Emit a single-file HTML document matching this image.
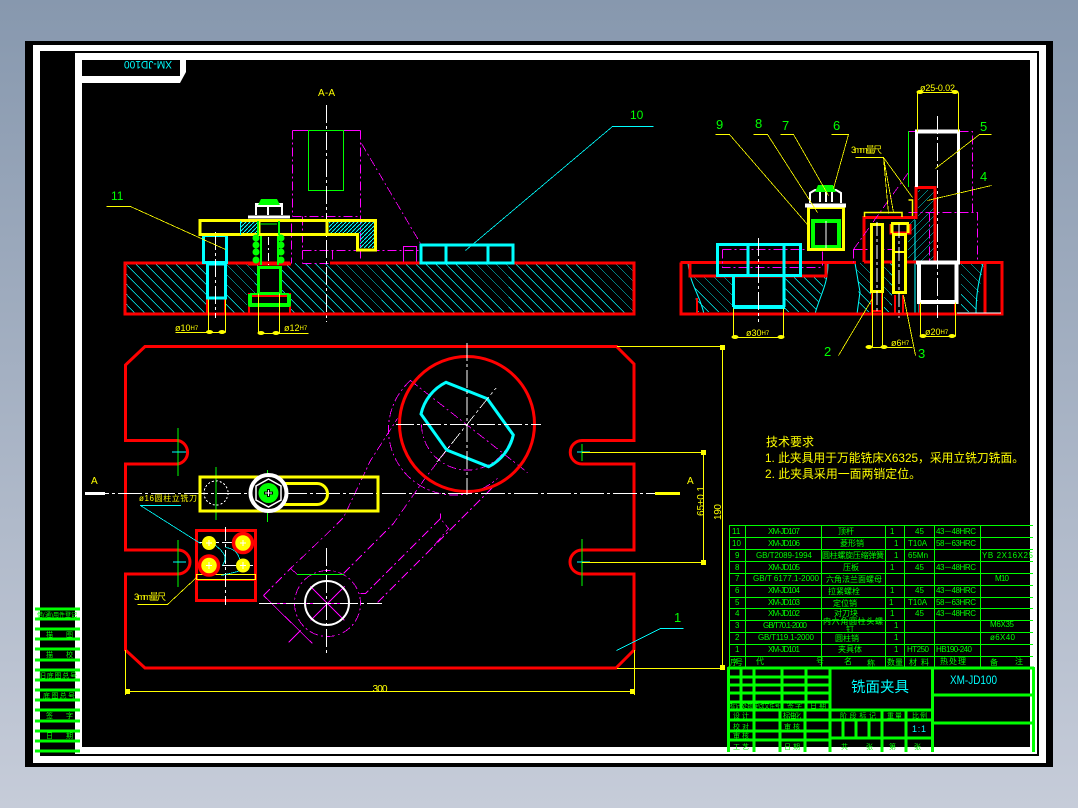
<!DOCTYPE html>
<html lang="zh"><head><meta charset="utf-8"><title>铣面夹具</title>
<style>
html,body{margin:0;padding:0;width:1078px;height:808px;overflow:hidden;background:#a5b0c2}
svg{display:block}
text{font-family:"Liberation Sans","Noto Sans CJK SC",sans-serif}
.ln{shape-rendering:crispEdges}
</style></head><body>
<svg width="1078" height="808" viewBox="0 0 1078 808" xmlns="http://www.w3.org/2000/svg">
<defs>
<linearGradient id="bg" x1="0" y1="0" x2="0" y2="1"><stop offset="0" stop-color="#8798ae"/><stop offset="1" stop-color="#c6ccd9"/></linearGradient>
<pattern id="h3" width="4" height="4" patternUnits="userSpaceOnUse"><path d="M0 4L4 0" stroke="#0ff" stroke-width="1" shape-rendering="crispEdges"/></pattern>
<clipPath id="cBase"><path d="M125 263H634V314H125Z"/></clipPath>
<clipPath id="cRight"><path d="M693 277H733V312H697ZM784 277H826L815 312H784ZM856 263H871V312H860ZM884 263H892V312H884ZM961 263H984L976 312H961Z"/></clipPath>
<clipPath id="cPart4"><path d="M918 190H934V262H908V218H918Z"/></clipPath>
</defs>
<rect width="1078" height="808" fill="url(#bg)"/>
<!-- frame -->
<rect x="25" y="41" width="1028" height="726" fill="#000"/>
<rect x="33" y="45" width="1013" height="718" fill="#fff"/>
<rect x="40" y="51" width="999" height="705" fill="#000"/>
<rect x="75" y="53" width="962" height="701" fill="#fff"/>
<rect x="82" y="60" width="948" height="687" fill="#000"/>
<path d="M82 60H186V72L180 83H82Z" fill="#fff"/>
<rect x="82" y="60" width="98" height="16" fill="#000"/>
<text x="148" y="69" transform="rotate(180 148 65)" fill="#0ff" font-size="11" text-anchor="middle" textLength="48" lengthAdjust="spacingAndGlyphs">XM-JD100</text>
<!-- left column -->
<g stroke="#0f0" stroke-width="3" class="ln">
<path d="M35 609H80M35 619H80M35 629H80M35 639H80M35 649H80M35 660H80M35 670H80M35 680H80M35 690H80M35 700H80M35 710H80M35 721H80M35 731H80M35 741H80M35 751H80"/>
</g>
<g fill="#0f0" font-size="6">
<text x="37" y="617" textLength="40" lengthAdjust="spacingAndGlyphs">借(通)用件登记</text>
<text x="46" y="637" font-size="7">描</text><text x="66" y="637" font-size="7">图</text>
<text x="46" y="657" font-size="7">描</text><text x="66" y="657" font-size="7">校</text>
<text x="39" y="678" textLength="38" font-size="7" lengthAdjust="spacing">旧底图总号</text>
<text x="43" y="698" textLength="32" font-size="7" lengthAdjust="spacing">底图总号</text>
<text x="46" y="718" font-size="7">签</text><text x="66" y="718" font-size="7">字</text>
<text x="46" y="738" font-size="7">日</text><text x="66" y="738" font-size="7">期</text>
</g>

<!-- top-left view: hatching and magenta -->
<path clip-path="url(#cBase)" stroke="#0ff" stroke-width=".7" fill="none" class="ln" d="M75 263l51 51M85 263l51 51M95 263l51 51M105 263l51 51M115 263l51 51M125 263l51 51M135 263l51 51M145 263l51 51M155 263l51 51M165 263l51 51M175 263l51 51M185 263l51 51M195 263l51 51M205 263l51 51M215 263l51 51M225 263l51 51M235 263l51 51M245 263l51 51M255 263l51 51M265 263l51 51M275 263l51 51M285 263l51 51M295 263l51 51M305 263l51 51M315 263l51 51M325 263l51 51M335 263l51 51M345 263l51 51M355 263l51 51M365 263l51 51M375 263l51 51M385 263l51 51M395 263l51 51M405 263l51 51M415 263l51 51M425 263l51 51M435 263l51 51M445 263l51 51M455 263l51 51M465 263l51 51M475 263l51 51M485 263l51 51M495 263l51 51M505 263l51 51M515 263l51 51M525 263l51 51M535 263l51 51M545 263l51 51M555 263l51 51M565 263l51 51M575 263l51 51M585 263l51 51M595 263l51 51M605 263l51 51M615 263l51 51M625 263l51 51"/>
<rect x="247" y="293" width="44" height="21" fill="#000"/>
<rect x="258" y="263" width="22" height="30" fill="#000"/>
<rect x="207" y="298" width="18" height="16" fill="#000"/>
<g fill="none" stroke="#f0f" stroke-width=".8" class="ln" transform="translate(.5 .5)">
<path d="M292 130H360"/>
<path d="M292 130V216M360 130V262M292 216H360M302 216V263M302 250H420M332 250V263M291 223V263M302 263H410" stroke-dasharray="9 3 2 3"/>
<path d="M361 143L420 243" stroke-dasharray="9 3 2 3"/>
<path d="M403 246H416V263H403Z"/>
</g>
<rect x="308.500" y="130.500" width="35" height="60" fill="none" stroke="#0f0" class="ln"/>
<path d="M326.500 105V322" stroke="#fff" stroke-dasharray="18 3 3 3" class="ln"/>
<!-- base plate -->
<path d="M290 263H125V314H634V263H330" fill="none" stroke="#f00" stroke-width="3"/>
<path d="M249 293V314M290 293V314M207 299V314M225 299V314" stroke="#f00" stroke-width="2" class="ln"/>
<path d="M248 264H291" stroke="#f00" stroke-width="3"/>
<rect x="248" y="293" width="43" height="4" fill="#f00"/>
<!-- cyan screw -->
<rect x="203.500" y="235.500" width="23" height="27" fill="#000" stroke="#0ff" stroke-width="3"/>
<rect x="207.500" y="264" width="18" height="34" fill="#000" stroke="#0ff" stroke-width="3"/>
<path d="M215.500 232V318" stroke="#fff" stroke-dasharray="18 3 3 3" class="ln"/>
<!-- clamp -->
<rect x="240" y="222" width="18" height="11" fill="url(#h3)"/>
<path d="M329 222H374V248H360V233H329Z" fill="url(#h3)"/>
<path d="M200 220.500H375.500V250H357.500V234.500H200Z" fill="none" stroke="#ff0" stroke-width="3"/>
<path d="M259 220V235M327 220V235" stroke="#ff0" stroke-width="3"/>
<path d="M240.500 221V235" stroke="#0ff" class="ln"/>
<path d="M260 224H277" stroke="#0f0" class="ln"/>
<!-- green stud -->
<g stroke="#0f0" fill="none">
<path d="M258 221V235M279 221V235" stroke-width="2"/>
<rect x="258.500" y="267.500" width="22" height="26" stroke-width="3"/>
<path d="M261 236V265M278 236V265" stroke-width="2"/>
<path d="M250 294V305H289V294" stroke-width="4" stroke-linejoin="round"/>
<path d="M250 294H289" stroke-width="2"/>
</g>
<g fill="#0f0">
<circle cx="256" cy="238" r="3.500"/><circle cx="256" cy="245" r="3.500"/><circle cx="256" cy="252" r="3.500"/><circle cx="256" cy="260" r="3.500"/>
<circle cx="281" cy="238" r="3.500"/><circle cx="281" cy="245" r="3.500"/><circle cx="281" cy="252" r="3.500"/><circle cx="281" cy="260" r="3.500"/>
</g>
<path d="M268.500 237V265" stroke="#fff" stroke-dasharray="8 3 2 3" class="ln"/>
<!-- nut -->
<path d="M248 217H290" stroke="#fff" stroke-width="3"/>
<path d="M256 215V204H282V215M268 204V215M256 206H282" fill="none" stroke="#fff" stroke-width="2"/>
<path d="M258 205L261 199H277L280 205Z" fill="#0f0"/>
<!-- part 10 -->
<g fill="none" stroke="#0ff" stroke-width="3">
<rect x="421" y="245" width="92" height="18"/>
<path d="M446 245V263M488 245V263"/>
</g>
<path d="M465 250L612 126H653" fill="none" stroke="#0ff" stroke-width=".8" class="ln" transform="translate(.5 .5)"/>
<!-- labels & dims of top-left -->
<g fill="none" stroke="#ff0" stroke-width=".8" class="ln" transform="translate(.5 .5)">
<path d="M106 206H130L225 249"/>
<path d="M208 299V332M225 299V332M175 332H225"/>
<path d="M258 293V333M279 293V333M258 333H308"/>
</g>
<g fill="#ff0">
<ellipse cx="209.500" cy="332" rx="3.500" ry="2"/><ellipse cx="222" cy="332" rx="3.500" ry="2"/>
<ellipse cx="261" cy="333" rx="3.500" ry="2"/><ellipse cx="276" cy="333" rx="3.500" ry="2"/>
<text x="175" y="331" font-size="9">ø10<tspan font-size="6" dy="-1">H7</tspan></text>
<text x="284" y="331" font-size="9">ø12<tspan font-size="6" dy="-1">H7</tspan></text>
<text x="318" y="96" font-size="10" textLength="17">A-A</text>
</g>
<text x="111" y="200" fill="#0f0" font-size="12">11</text>
<text x="630" y="119" fill="#0f0" font-size="12">10</text>

<!-- right view -->
<path clip-path="url(#cRight)" stroke="#0ff" stroke-width=".7" fill="none" class="ln" d="M640 263l51 51M650 263l51 51M660 263l51 51M670 263l51 51M680 263l51 51M690 263l51 51M700 263l51 51M710 263l51 51M720 263l51 51M730 263l51 51M740 263l51 51M750 263l51 51M760 263l51 51M770 263l51 51M780 263l51 51M790 263l51 51M800 263l51 51M810 263l51 51M820 263l51 51M830 263l51 51M840 263l51 51M850 263l51 51M860 263l51 51M870 263l51 51M880 263l51 51M890 263l51 51M900 263l51 51M910 263l51 51M920 263l51 51M930 263l51 51M940 263l51 51M950 263l51 51M960 263l51 51M970 263l51 51M980 263l51 51"/>
<path clip-path="url(#cPart4)" stroke="#0ff" stroke-width=".7" fill="none" class="ln" d="M840 262l72 -72M848 262l72 -72M856 262l72 -72M864 262l72 -72M872 262l72 -72M880 262l72 -72M888 262l72 -72M896 262l72 -72M904 262l72 -72M912 262l72 -72M920 262l72 -72M928 262l72 -72"/>
<g fill="none" stroke="#0ff" stroke-width="1">
<path d="M688 263C690 285 700 295 704 314M828 263C828 285 820 295 815 314M855 263L860 292L857 314M983 263C978 285 976 295 976 314M915 263V314M919 290V314M915 220V262"/>
</g>
<g fill="none" stroke="#f00" stroke-width="3">
<path d="M680.500 262.500H856M826 263V276H690V263M681 262.500V314H1002V262.500H960M985 263V314"/>
<path d="M864 262V217.500H916V187.500H935V262H864"/>
<path d="M891 224V233H910V224"/>
</g>
<path d="M697 298V314M872 292V314M882 292V314M872 311H882M895 295V314M903 295V314M920 302V314M955 302V314" stroke="#f00" stroke-width="2" class="ln"/>
<!-- magenta right -->
<g fill="none" stroke="#f0f" stroke-width=".8" class="ln" transform="translate(.5 .5)">
<path d="M908 131H972V212M908 212H977V262M929 212V262M853 249L908 172M853 249V262M853 249H895M722 249V267H822M722 249H822V267" stroke-dasharray="9 3 2 3"/>
</g>
<path d="M908.500 131V187" stroke="#0f0" stroke-width="1" class="ln"/>
<!-- cyan block -->
<rect x="717.500" y="244.500" width="83" height="31" fill="none" stroke="#0ff" stroke-width="3"/>
<path d="M748 244V276M784 244V276" stroke="#0ff" stroke-width="3"/>
<path d="M733.500 276V307M784 276V307M733 307H785" fill="none" stroke="#0ff" stroke-width="3"/>
<path d="M733 307H785" stroke="#0ff" stroke-width="4"/>
<path d="M758.500 238V322" stroke="#fff" stroke-dasharray="18 3 3 3" class="ln"/>
<!-- part 8 -->
<rect x="813" y="221" width="26" height="26" fill="none" stroke="#0f0" stroke-width="4"/>
<rect x="808.500" y="207.500" width="35" height="42" fill="none" stroke="#ff0" stroke-width="3"/>
<path d="M805 205.500H846" stroke="#fff" stroke-width="4"/>
<path d="M810 203V193L815 190H836L841 193V203M820 192V202M826 192V202M832 192V202" fill="none" stroke="#fff" stroke-width="2"/>
<path d="M815 192L818 185H833L836 192Z" fill="#0f0"/>
<path d="M826 221V248" stroke="#fff" class="ln"/>
<!-- part 2 & 3 -->
<rect x="871.500" y="224.500" width="11" height="67" fill="#000" stroke="#ff0" stroke-width="3"/>
<path d="M877 222V312" stroke="#fff" stroke-dasharray="14 3 3 3" class="ln"/>
<path d="M891 223.500H909M892 224V233M908 224V233" fill="none" stroke="#ff0" stroke-width="3"/>
<rect x="893.500" y="234.500" width="12" height="58" fill="#000" stroke="#ff0" stroke-width="3"/>
<path d="M894 252H905" stroke="#ff0" stroke-width="2"/>
<path d="M899 224V318" stroke="#fff" stroke-dasharray="14 3 3 3" class="ln"/>
<path d="M864.500 217V212.500H902V217M908.500 200H912.500V216" fill="none" stroke="#ff0" stroke-width="1.500"/>
<!-- part 5 white -->
<g fill="none" stroke="#fff">
<path d="M916.500 187V131.500H958.500V262" stroke-width="3"/>
<path d="M915 131.500H960" stroke-width="4"/>
<path d="M916 262.500H960" stroke-width="4"/>
<path d="M919 263V302H956.500V263" stroke-width="4"/>
</g>
<path d="M937.500 116V318" stroke="#fff" stroke-dasharray="18 3 3 3" class="ln"/>
<path d="M957 313H1001" stroke="#fff" class="ln"/>
<!-- leaders right -->
<g fill="none" stroke="#ff0" stroke-width=".8" class="ln" transform="translate(.5 .5)">
<path d="M715 134H729L807 224M753 134H767L817 212M780 134H793L828 195M831 134H848L833 188"/>
<path d="M855 157H883L893 212M883 157L912 197M883 157L888 213"/>
<path d="M991 134H979L935 168M991 185L927 200"/>
<path d="M872 298L838 355M903 295L915 355"/>
<path d="M917 92H958M917 92V131M958 92V131"/>
<path d="M733 308V337M783 308V337M733 337H783"/>
<path d="M920 302V336M955 302V336M920 336H955"/>
<path d="M872 292V347M882 292V347M872 347H912"/>
</g>
<g fill="#ff0">
<ellipse cx="920" cy="92" rx="3.500" ry="2"/><ellipse cx="955" cy="92" rx="3.500" ry="2"/>
<ellipse cx="735" cy="337" rx="3.500" ry="2"/><ellipse cx="781" cy="337" rx="3.500" ry="2"/>
<ellipse cx="923" cy="336" rx="3.500" ry="2"/><ellipse cx="952" cy="336" rx="3.500" ry="2"/>
<ellipse cx="869" cy="347" rx="3.500" ry="2"/><ellipse cx="884" cy="347" rx="3.500" ry="2"/>
<text x="920" y="91" font-size="9" textLength="35">ø25-0.02</text>
<text x="746" y="336" font-size="9">ø30<tspan font-size="6" dy="-1">H7</tspan></text>
<text x="925" y="335" font-size="9">ø20<tspan font-size="6" dy="-1">H7</tspan></text>
<text x="891" y="346" font-size="9">ø6<tspan font-size="6" dy="-1">H7</tspan></text>
<text x="851" y="153" font-size="9" textLength="31">3mm量尺</text>
</g>
<g fill="#0f0" font-size="13">
<text x="716" y="129">9</text><text x="755" y="128">8</text><text x="782" y="130">7</text><text x="833" y="130">6</text>
<text x="980" y="131">5</text><text x="980" y="181">4</text><text x="824" y="356">2</text><text x="918" y="358">3</text>
<text x="674" y="622">1</text>
</g>

<!-- plan view -->
<g fill="none" stroke="#f0f" stroke-width=".8" class="ln" transform="translate(.5 .5)">
<path d="M421 424A46 46 0 0 0 511 437" stroke-dasharray="9 3 2 3"/>
<path d="M410 380A62 62 0 0 0 497 478" stroke-dasharray="9 3 2 3"/>
<path d="M410 380L527 472" stroke-dasharray="9 3 2 3"/>
<path d="M263 595L290 568L333 527L343 517L370 460L397 418" stroke-dasharray="9 3 2 3"/>
<path d="M263 595L312 643M290 568L297 574M288 642L300 630"/>
<path d="M343 573L393 523L423 480L452 442" stroke-dasharray="9 3 2 3"/>
<path d="M377 602L497 482" stroke-dasharray="9 3 2 3"/>
<path d="M360 593H365L440 518L448 528L431 548M440 513V518" stroke-dasharray="9 3 2 3"/>
<path d="M327 570A33 33 0 1 0 360 603A33 33 0 0 0 327 570" stroke-dasharray="9 3 2 3"/>
<path d="M259 603H349M310 586L344 620M344 586L310 620"/>
</g>
<path d="M297 574.500H344" stroke="#0f0" class="ln"/>
<circle cx="327" cy="603" r="22" fill="none" stroke="#fff" stroke-width="2"/>
<path d="M326.500 548V655" stroke="#fff" stroke-dasharray="18 3 3 3" class="ln"/>
<path d="M259 603.500H382" stroke="#fff" stroke-dasharray="18 3 3 3" class="ln"/>
<!-- plate -->
<path d="M145 346.500H616.500L634 364V440.500H582A11.700 11.700 0 0 0 582 464H634V550H582A12 12 0 0 0 582 574H634V650L616 668H145L125.500 650V574H178A12 12 0 0 0 178 550H125.500V464H178A12 12 0 0 0 178 440.500H125.500V365Z" fill="none" stroke="#f00" stroke-width="3"/>
<circle cx="467" cy="424" r="67.500" fill="none" stroke="#f00" stroke-width="3"/>
<path d="M446 382.300L487.300 398.700L513.300 435A47 47 0 0 1 488.700 466.700L446.700 450L421 414A47 47 0 0 1 446 382.300Z" fill="none" stroke="#0ff" stroke-width="3"/>
<path d="M467 343V495M396 424.500H541" stroke="#fff" stroke-dasharray="18 3 3 3" class="ln"/>
<path d="M437 462L496 388" stroke="#fff" stroke-width=".8" stroke-dasharray="14 3 3 3" class="ln"/>
<!-- slot crosses -->
<g stroke="#0f0" class="ln">
<path d="M178 428V476M178 540V587M582 444V461M582 539V586M267.500 470V522M216 467V520"/>
</g>
<g stroke="#0ff" class="ln"><path d="M172 452H186M173 562H186M577 452H590M577 562H590"/></g>
<!-- centre line -->
<path d="M85 493.500H655" stroke="#fff" stroke-dasharray="24 3 3 3" class="ln"/>
<path d="M85 493.500H105" stroke="#fff" stroke-width="3"/>
<path d="M655 493.500H680" stroke="#ff0" stroke-width="3"/>
<g fill="#ff0" font-size="10"><text x="91" y="484">A</text><text x="687" y="484">A</text></g>
<!-- yellow bar -->
<rect x="200" y="477" width="178" height="34" fill="none" stroke="#ff0" stroke-width="3"/>
<path d="M276 483.500H317A10.500 10.500 0 0 1 317 504.500H276" fill="none" stroke="#ff0" stroke-width="3"/>
<circle cx="216" cy="493" r="12" fill="none" stroke="#fff" stroke-dasharray="2 2" class="ln"/>
<circle cx="268.500" cy="493" r="18" fill="#000" stroke="#fff" stroke-width="4"/>
<path d="M268.500 479L281 486V500L268.500 507L256 500V486Z" fill="#000" stroke="#fff" stroke-width="1.500"/>
<circle cx="268.500" cy="493" r="10" fill="#0f0"/>
<path d="M268.500 489V497M264 493H273" stroke="#000" stroke-width="3"/>
<path d="M268.500 490V496M265 493H272" stroke="#fff" stroke-width="1" class="ln"/>
<!-- small block -->
<rect x="196.500" y="530.500" width="59" height="70" fill="none" stroke="#f00" stroke-width="3"/>
<path d="M196 580H256" stroke="#f00" stroke-width="2"/>
<rect x="196.500" y="574.500" width="59" height="5" fill="none" stroke="#ff0" class="ln"/>
<path d="M225.500 527V605M199 542.500H253M199 565.500H253" stroke="#fff" stroke-dasharray="14 3 3 3" class="ln"/>
<path d="M140 505L200 543M215 545C228 555 225 560 222 565M225 547C235 548 240 555 240 565M221 575C228 573 235 572 240 570" fill="none" stroke="#0ff" stroke-width=".8" class="ln" transform="translate(.5 .5)"/>
<path d="M140 505.500H181" stroke="#0ff" class="ln"/>
<g>
<circle cx="243" cy="543" r="9.500" fill="#ff0" stroke="#f00" stroke-width="3.500"/>
<circle cx="209" cy="565.500" r="9.500" fill="#ff0" stroke="#f00" stroke-width="3.500"/>
<circle cx="209" cy="543" r="7" fill="#ff0"/>
<circle cx="243" cy="565.500" r="7" fill="#ff0"/>
</g>
<path d="M209 540V546M206 543H212M243 540V546M240 543H246M209 562V569M206 565.500H212M243 562V569M240 565.500H246" stroke="#fff" class="ln"/>
<text x="139" y="501" fill="#ff0" font-size="8" textLength="58">ø16圆柱立铣刀</text>
<text x="134" y="600" fill="#ff0" font-size="9" textLength="32">3mm量尺</text>
<path d="M137 604H167L196 577" fill="none" stroke="#ff0" stroke-width=".8" class="ln" transform="translate(.5 .5)"/>
<!-- dims plan -->
<g fill="none" stroke="#ff0" stroke-width="1" class="ln">
<path d="M617 346.500H722M617 668.500H722M722.500 347V668M582 452.500H703M582 562.500H703M703.500 452V562M125.500 650V695M634.500 650V695M125 691.500H634"/>
</g>
<g fill="#ff0">
<rect x="720" y="345" width="5" height="5"/><rect x="720" y="665" width="5" height="5"/>
<rect x="701" y="450" width="5" height="5"/><rect x="701" y="560" width="5" height="5"/>
<rect x="125" y="689" width="5" height="5"/><rect x="630" y="689" width="5" height="5"/>
<text x="380" y="692" font-size="10" text-anchor="middle" textLength="15">300</text>
<text transform="translate(704,516) rotate(-90)" font-size="10" textLength="30">65±0.1</text>
<text transform="translate(721,520) rotate(-90)" font-size="10" textLength="16">190</text>
</g>
<path d="M616 650L660 628H683" fill="none" stroke="#0ff" stroke-width=".8" class="ln" transform="translate(.5 .5)"/>
<!-- tech req -->
<g fill="#ff0" font-size="12">
<text x="766" y="446" textLength="48">技术要求</text>
<text x="765" y="462" textLength="259" lengthAdjust="spacingAndGlyphs">1. 此夹具用于万能铣床X6325，采用立铣刀铣面。</text>
<text x="765" y="478" textLength="156" lengthAdjust="spacingAndGlyphs">2. 此夹具采用一面两销定位。</text>
</g>
<!-- parts table -->
<g stroke="#0f0" stroke-width="1" class="ln" fill="none">
<path d="M729 525.500H1033M729 537.500H1033M729 549.500H1033M729 561.500H1033M729 573.500H1033M729 585.500H1033M729 597.500H1033M729 608.500H1033M729 620.500H1033M729 632.500H1033M729 644.500H1033M729 656.500H1033"/>
<path d="M729.500 525V667M745.500 525V667M821.500 525V667M885.500 525V667M904.500 525V667M934.500 525V667M980.500 525V667"/>
</g>
<g fill="#0f0" font-size="8">
<text x="732" y="534">11</text><text x="768" y="534" textLength="32">XM-JD107</text><text x="838" y="534" textLength="16">顶杆</text><text x="890" y="534">1</text><text x="915" y="534">45</text><text x="936" y="534" textLength="40">43－48HRC</text>
<text x="732" y="546">10</text><text x="768" y="546" textLength="32">XM-JD106</text><text x="840" y="546" textLength="24">菱形销</text><text x="894" y="546">1</text><text x="908" y="546">T10A</text><text x="936" y="546" textLength="40">58－63HRC</text>
<text x="735" y="558">9</text><text x="756" y="558" textLength="56">GB/T2089-1994</text><text x="822" y="558" textLength="62">圆柱螺旋压缩弹簧</text><text x="894" y="558">1</text><text x="908" y="558">65Mn</text><text x="982" y="558" textLength="51">YB 2X16X25</text>
<text x="735" y="570">8</text><text x="768" y="570" textLength="32">XM-JD105</text><text x="843" y="570" textLength="16">压板</text><text x="890" y="570">1</text><text x="915" y="570">45</text><text x="936" y="570" textLength="40">43－48HRC</text>
<text x="735" y="581">7</text><text x="753" y="581" textLength="66">GB/T 6177.1-2000</text><text x="826" y="582" textLength="56">六角法兰面螺母</text><text x="995" y="581" textLength="14">M10</text>
<text x="735" y="593">6</text><text x="768" y="593" textLength="32">XM-JD104</text><text x="828" y="594" textLength="32">拉紧螺栓</text><text x="890" y="593">1</text><text x="915" y="593">45</text><text x="936" y="593" textLength="40">43－48HRC</text>
<text x="735" y="605">5</text><text x="768" y="605" textLength="32">XM-JD103</text><text x="833" y="606" textLength="24">定位销</text><text x="889" y="605">1</text><text x="908" y="605">T10A</text><text x="936" y="605" textLength="40">58－63HRC</text>
<text x="735" y="616">4</text><text x="768" y="616" textLength="32">XM-JD102</text><text x="834" y="616" textLength="24">对刀块</text><text x="890" y="616">1</text><text x="915" y="616">45</text><text x="936" y="616" textLength="40">43－48HRC</text>
<text x="823" y="624" textLength="60">内六角圆柱头螺</text><text x="846" y="632">钉</text>
<text x="735" y="628">3</text><text x="763" y="628" textLength="44">GB/T70.1-2000</text><text x="894" y="628">1</text><text x="990" y="627" textLength="24">M6X35</text>
<text x="735" y="640">2</text><text x="758" y="640" textLength="56">GB/T119.1-2000</text><text x="835" y="641" textLength="24">圆柱销</text><text x="894" y="640">1</text><text x="990" y="640" textLength="25">ø6X40</text>
<text x="735" y="652">1</text><text x="768" y="652" textLength="32">XM-JD101</text><text x="838" y="652" textLength="24">夹具体</text><text x="894" y="652">1</text><text x="907" y="652" textLength="22">HT250</text><text x="936" y="652" textLength="36">HB190-240</text>
<text x="730" y="665" textLength="13">序号</text><text x="756" y="664">代</text><text x="816" y="664">号</text><text x="844" y="664">名</text><text x="867" y="666">称</text><text x="887" y="665" textLength="16">数量</text><text x="909" y="665" textLength="20">材 料</text><text x="940" y="664" textLength="26">热处理</text><text x="990" y="665">备</text><text x="1015" y="664">注</text>
</g>
<!-- title block -->
<g fill="none" stroke="#0f0" stroke-width="3" class="ln">
<path d="M728 668H1034M728.500 667V752M1033.500 667V752M830 667V752M932.500 667V752"/>
<path d="M728 677H830M728 685H830M728 693H830M728 702H830M728 710H932M728 720H932M728 731H830M728 740H830M830 738H932M932 695H1034M932 723H1034"/>
<path d="M741 667V710M754 667V752M782 667V710M806 667V710M780 710V752M805 710V752M882 710V752M906 710V752M843 720V738M856 720V738M869 720V738"/>
</g>
<g fill="#0f0" font-size="7">
<text x="730" y="708" textLength="50" lengthAdjust="spacingAndGlyphs">标记 处数 更改文件号</text><text x="787" y="708" textLength="15">签字</text><text x="810" y="708" textLength="16">日期</text>
<text x="733" y="718" textLength="16">设计</text><text x="783" y="718" textLength="18">标准化</text>
<text x="733" y="729" textLength="16">校对</text><text x="784" y="729" textLength="16">审核</text>
<text x="733" y="738" textLength="16">审核</text>
<text x="733" y="749" textLength="16">工艺</text><text x="784" y="749" textLength="16">日期</text>
<text x="840" y="718" textLength="36">阶段标记</text><text x="887" y="718" textLength="15">重量</text><text x="912" y="718" textLength="15">比例</text>
<text x="841" y="749">共</text><text x="866" y="749">张</text><text x="889" y="749">第</text><text x="914" y="749">张</text>
</g>
<text x="912" y="732" fill="#0ff" font-size="9" textLength="14">1:1</text>
<text x="851" y="692" fill="#0ff" font-size="14.500" textLength="58">铣面夹具</text>
<text x="950" y="684" fill="#0ff" font-size="12" textLength="47" lengthAdjust="spacingAndGlyphs">XM-JD100</text>
</svg>
</body></html>
